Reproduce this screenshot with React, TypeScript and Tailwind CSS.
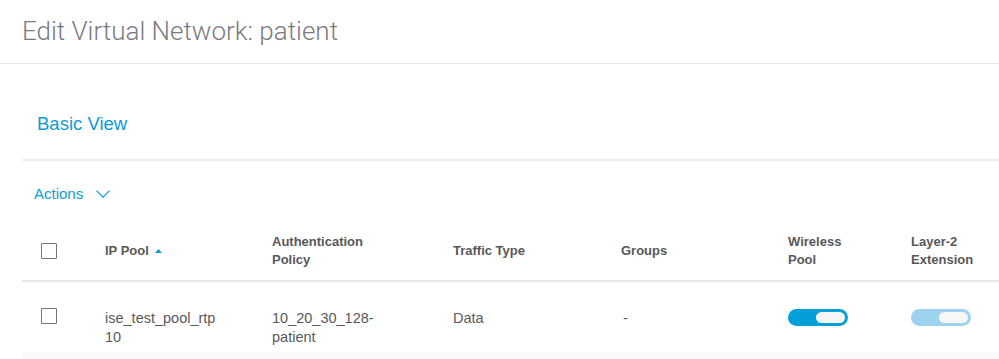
const BLUE = "text-[#0a9dd9]";

function Checkbox() {
  return <div className="ml-[19px] size-4 rounded-[1px] border border-[#767676] bg-white" />;
}

function Toggle({ on }: { on: boolean }) {
  return (
    <div
      className={
        on
          ? "flex h-[17px] w-[60px] items-center justify-end rounded-full bg-[#049fd9] pr-[3px]"
          : "flex h-[17px] w-[60px] items-center justify-end rounded-full bg-[#9dd3ee] pr-[3px]"
      }
    >
      <div className="h-[11px] w-[29px] rounded-full bg-[#f7f7f7]" />
    </div>
  );
}

const cols = "grid grid-cols-[83px_167px_181px_168px_167px_123px_1fr]";

export default function App() {
  return (
    <div className="h-[359px] w-[999px] overflow-hidden bg-white font-['Liberation_Sans',Arial,sans-serif]">
      <header className="flex h-[64px] items-center border-b border-[#e4e4e4] pl-[22px]">
        <h1 className="font-['Roboto',sans-serif] text-[26px] font-light text-[#7b7b7f]">
          Edit Virtual Network: patient
        </h1>
      </header>

      <div className="pl-[22px]">
        <div className="h-[97px] border-b-2 border-[#ececec] pl-[15px] pt-[48px]">
          <span className={`text-[18.5px] leading-6 ${BLUE}`}>Basic View</span>
        </div>

        <div className="h-[61px] pl-[12px] pt-[23px]">
          <button type="button" className={`flex items-center gap-[13px] text-[15px] leading-5 ${BLUE}`}>
            Actions
            <svg width="14" height="8" viewBox="0 0 14 8" fill="none" stroke="currentColor" strokeWidth="1.2">
              <path d="M0.5 0.6 L7 7.2 L13.5 0.6" />
            </svg>
          </button>
        </div>

        {/* table header */}
        <div className={`${cols} h-[60px] items-center border-b-2 border-[#e8e8e8] text-[13px] font-bold leading-[18px] text-[#58585b]`}>
          <Checkbox />
          <div className="flex items-center gap-[6px]">
            IP Pool
            <svg width="7" height="4" viewBox="0 0 7 4" className="fill-[#0a9dd9]">
              <path d="M0 4 L3.5 0 L7 4 Z" />
            </svg>
          </div>
          <div className="w-[100px]">Authentication Policy</div>
          <div>Traffic Type</div>
          <div>Groups</div>
          <div className="w-[70px]">Wireless Pool</div>
          <div className="w-[70px]">Layer-2 Extension</div>
        </div>

        {/* row */}
        <div className={`${cols} h-[70px] items-start pt-[26px] text-[14.5px] leading-[19px] text-[#58585b]`}>
          <Checkbox />
          <div className="mt-px w-[125px]">ise_test_pool_rtp 10</div>
          <div className="mt-px w-[120px]">10_20_30_128-patient</div>
          <div className="mt-px">Data</div>
          <div className="mt-px pl-[2px]">-</div>
          <div className="pt-px">
            <Toggle on />
          </div>
          <div className="pt-px">
            <Toggle on={false} />
          </div>
        </div>

        <div className="h-[40px] bg-[#f9f9f9]" />
      </div>
    </div>
  );
}
